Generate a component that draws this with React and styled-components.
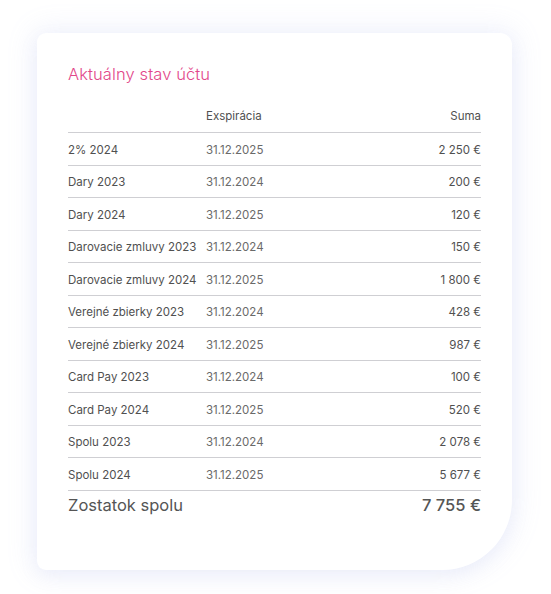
import React from "react";
import styled, { createGlobalStyle } from "styled-components";

const Global = createGlobalStyle`
  html, body { margin: 0; padding: 0; background: #ffffff; }
  body { font-family: Inter, "Open Sans", sans-serif; }
`;

const Page = styled.div`
  padding: 33px 0 0 37px;
  width: 551px;
  height: 594px;
  box-sizing: border-box;
`;

const Card = styled.section`
  width: 475px;
  height: 537px;
  box-sizing: border-box;
  background: #fff;
  border-radius: 9px 12px 70px 9px;
  box-shadow: 0 0 28px 4px rgba(150, 160, 235, 0.14), 0 6px 18px rgba(170, 178, 230, 0.1);
  padding: 30px 31px 0 31px;
`;

const Title = styled.h2`
  margin: 0 0 20px;
  font-size: 16.5px;
  line-height: 22px;
  font-weight: 300;
  color: #e2478a;
  letter-spacing: 0.1px;
`;

const Row = styled.div`
  display: grid;
  grid-template-columns: 138px 1fr 120px;
  align-items: center;
  height: ${p => (p.$header ? "22px" : "29.5px")};
  padding: ${p => (p.$header ? "0 0 5px" : "2px 0 0")};
  border-bottom: 1px solid #cfcfd3;
  font-size: 11.5px;
  box-sizing: content-box;
`;

const Cell = styled.span`
  white-space: nowrap;
  text-align: ${p => (p.$right ? "right" : "left")};
  color: ${p => (p.$muted ? "#6a6a6a" : "#505050")};
  font-weight: 400;
`;

const TotalRow = styled.div`
  display: flex;
  justify-content: space-between;
  align-items: center;
  height: 28px;
  color: #555;
  font-size: 16.5px;
`;

const TotalLabel = styled.span`
  font-weight: 400;
`;

const TotalValue = styled.span`
  font-weight: 500;
`;

const rows = [
  ["2% 2024", "31.12.2025", "2 250 €"],
  ["Dary 2023", "31.12.2024", "200 €"],
  ["Dary 2024", "31.12.2025", "120 €"],
  ["Darovacie zmluvy 2023", "31.12.2024", "150 €"],
  ["Darovacie zmluvy 2024", "31.12.2025", "1 800 €"],
  ["Verejné zbierky 2023", "31.12.2024", "428 €"],
  ["Verejné zbierky 2024", "31.12.2025", "987 €"],
  ["Card Pay 2023", "31.12.2024", "100 €"],
  ["Card Pay 2024", "31.12.2025", "520 €"],
  ["Spolu 2023", "31.12.2024", "2 078 €"],
  ["Spolu 2024", "31.12.2025", "5 677 €"],
];

export default function App() {
  return (
    <>
      <Global />
      <Page>
        <Card>
          <Title>Aktuálny stav účtu</Title>
          <Row $header>
            <Cell />
            <Cell>Exspirácia</Cell>
            <Cell $right>Suma</Cell>
          </Row>
          {rows.map(([name, date, sum]) => (
            <Row key={name}>
              <Cell>{name}</Cell>
              <Cell $muted>{date}</Cell>
              <Cell $right>{sum}</Cell>
            </Row>
          ))}
          <TotalRow>
            <TotalLabel>Zostatok spolu</TotalLabel>
            <TotalValue>7 755 €</TotalValue>
          </TotalRow>
        </Card>
      </Page>
    </>
  );
}
